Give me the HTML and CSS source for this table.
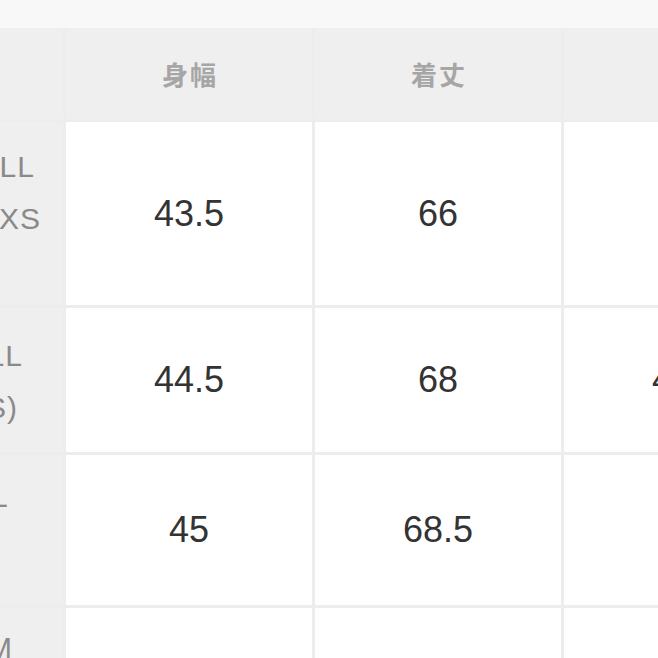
FILE: index.html
```html
<!DOCTYPE html>
<html lang="ja">
<head>
<meta charset="utf-8">
<title>サイズ表</title>
<link rel="stylesheet" href="styles.css">
</head>
<body>
<div class="sheet">
  <div class="size-grid">
    <div class="head corner"></div>
    <div class="head">身幅</div>
    <div class="head">着丈</div>
    <div class="head">肩幅</div>

    <div class="label row-a">
      <span class="ln e28">SMALL</span>
      <span class="ln e22">XS</span>
    </div>
    <div class="cell">43.5</div>
    <div class="cell">66</div>
    <div class="cell">42</div>

    <div class="label row-b">
      <span class="ln e40">SMALL</span>
      <span class="ln e45">(S)</span>
    </div>
    <div class="cell">44.5</div>
    <div class="cell">68</div>
    <div class="cell">43.5</div>

    <div class="label row-c">
      <span class="ln e54">-</span>
      <span class="ln e54">&nbsp;</span>
    </div>
    <div class="cell">45</div>
    <div class="cell">68.5</div>
    <div class="cell">44</div>

    <div class="label row-d">
      <span class="ln e50">M</span>
      <span class="ln e50">&nbsp;</span>
    </div>
    <div class="cell">46</div>
    <div class="cell">70</div>
    <div class="cell">45</div>
  </div>
</div>
</body>
</html>
```
FILE: styles.css
```css
html, body {
  margin: 0;
  padding: 0;
  overflow: hidden;
}

body {
  background: #f8f8f8;
  width: 658px;
  height: 658px;
}

.sheet {
  padding-top: 28px;
  width: 658px;
  overflow: hidden;
}

.size-grid {
  display: grid;
  grid-template-columns: 63px 246px 246px 246px;
  grid-template-rows: 91px 183px 144px 150px 150px;
  gap: 3px;
  background: #ededed;
  width: max-content;
}

.head {
  background: #efefef;
  display: flex;
  align-items: center;
  justify-content: center;
  font-family: "Noto Sans CJK JP", "Noto Sans", sans-serif;
  font-weight: 700;
  font-size: 26px;
  color: #a6a6a6;
  letter-spacing: 2px;
  padding-left: 2px;
}

.label {
  background: #efefef;
  display: flex;
  flex-direction: column;
  align-items: flex-end;
  justify-content: center;
  font-family: "Liberation Sans", Arial, sans-serif;
  font-size: 30px;
  letter-spacing: 1px;
  line-height: 52px;
  color: #8a8a8a;
  white-space: nowrap;
  overflow: hidden;
}

.row-a { padding-bottom: 42px; }
.row-b { padding-top: 4px; }
.row-d { padding-bottom: 18px; }

.e22 { margin-right: 22px; }
.e28 { margin-right: 28px; }
.e40 { margin-right: 40px; }
.e45 { margin-right: 45px; }
.e50 { margin-right: 50px; }
.e54 { margin-right: 54px; }

.cell {
  background: #ffffff;
  display: flex;
  align-items: center;
  justify-content: center;
  font-family: "Liberation Sans", Arial, sans-serif;
  font-size: 36px;
  color: #333333;
}
```
